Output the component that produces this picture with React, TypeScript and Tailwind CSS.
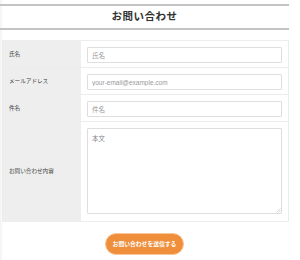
import { ReactNode } from 'react'

const FIELDS = [
  { label: '氏名', placeholder: '氏名', type: 'text' },
  { label: 'メールアドレス', placeholder: 'your-email@example.com', type: 'email' },
  { label: '件名', placeholder: '件名', type: 'text' },
]

function Row({ label, last, children }: { label: string; last?: boolean; children: ReactNode }) {
  return (
    <div className={`grid grid-cols-[78px_1fr] ${last ? '' : 'border-b border-[#ececec]'}`}>
      <div className="flex items-center bg-[#eeeeee] pl-[6px] text-[5.6px] text-[#444]">
        {label}
      </div>
      <div className={`px-[6px] pt-[6px] ${last ? 'pb-[7px]' : 'pb-[4px]'}`}>{children}</div>
    </div>
  )
}

export default function App() {
  return (
    <div
      className="min-h-[260px] w-[300px] bg-white shadow-[inset_3px_0_3px_-2px_rgba(0,0,0,0.07)]"
      style={{ fontFamily: '"Liberation Sans", "Noto Sans CJK JP", sans-serif' }}
    >
      <div className="w-[289px] pt-[4px]">
        {/* Title */}
        <div className="flex h-[26px] items-center justify-center border-y-2 border-[#c4c4c4]">
          <h1 className="text-[10.5px] font-bold tracking-[0.5px] text-[#333]">お問い合わせ</h1>
        </div>

        {/* Form table */}
        <div className="mt-[10px] ml-[2px] border border-[#ededed]">
          {FIELDS.map((field) => (
            <Row key={field.label} label={field.label}>
              <input
                type={field.type}
                placeholder={field.placeholder}
                className="block h-[16px] w-full rounded-[1px] border border-[#dedede] bg-white px-[4px] text-[6.5px] text-[#333] placeholder:text-[#999] outline-none"
              />
            </Row>
          ))}
          <Row label="お問い合わせ内容" last>
            <div className="relative">
              <textarea
                placeholder="本文"
                className="block h-[86px] w-full resize-none rounded-[1px] border border-[#dedede] bg-white px-[4px] py-[5px] text-[6.5px] text-[#333] placeholder:text-[#888] outline-none"
              />
              {/* faint resize grip */}
              <svg className="absolute right-[1px] bottom-[1px]" width="6" height="6" viewBox="0 0 6 6">
                <path d="M5.5 1.5 L1.5 5.5 M5.5 3.5 L3.5 5.5" stroke="#cfcfcf" strokeWidth="0.8" />
              </svg>
            </div>
          </Row>
        </div>

        {/* Submit */}
        <div className="mt-[11px] flex justify-center">
          <button
            type="button"
            className="h-[22px] w-[79px] rounded-full border border-[#f8c89b] bg-[#ef8e3b] text-[5.8px] font-bold text-white"
          >
            お問い合わせを送信する
          </button>
        </div>
      </div>
    </div>
  )
}
